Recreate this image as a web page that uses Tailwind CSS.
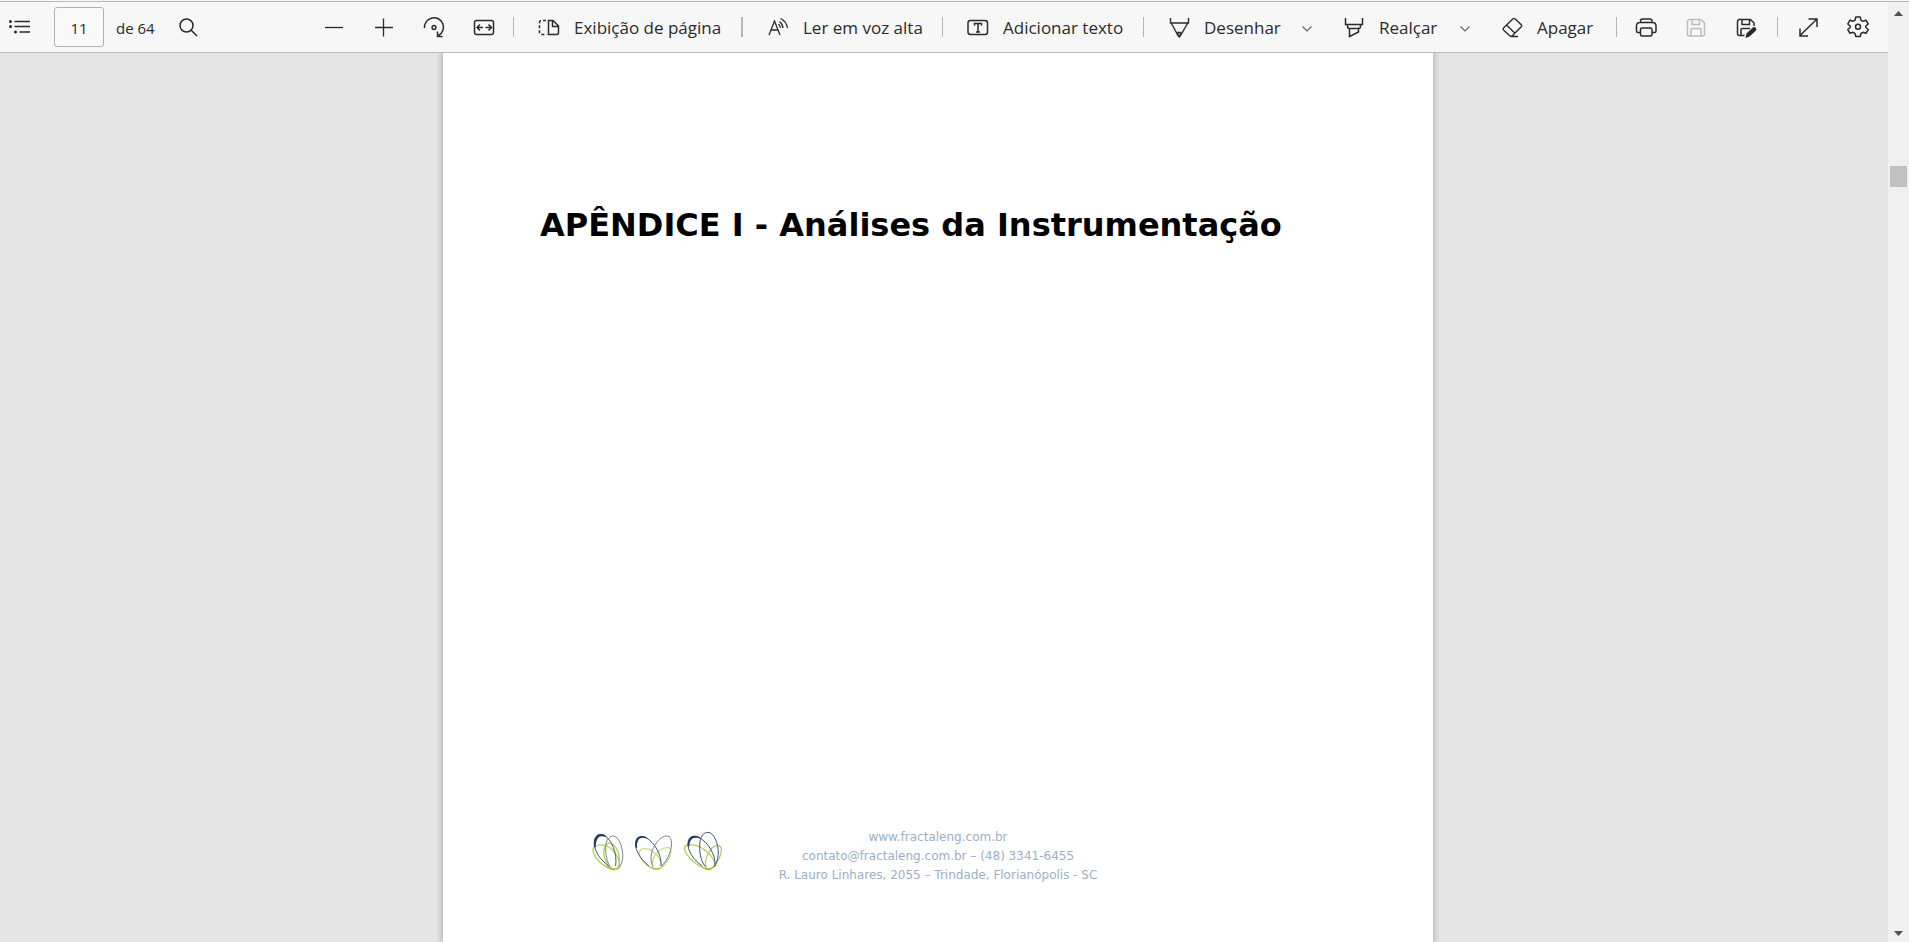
<!DOCTYPE html>
<html lang="pt-BR">
<head>
<meta charset="utf-8">
<title>Visualizador de PDF</title>
<script src="https://cdn.jsdelivr.net/npm/@tailwindcss/browser@4"></script>
</head>
<body class="flex h-screen flex-col overflow-hidden bg-[#f7f7f7] pt-px font-['Open_Sans','Noto_Sans',sans-serif] text-[#2b2b2b]">
<div class="flex min-h-0 flex-1 border-t border-[#bababa]">
  <div class="flex min-w-0 flex-1 flex-col">
    <header class="flex h-[51px] shrink-0 items-center justify-between border-b border-[#bababa] bg-[#f7f7f7] pr-[5px] pl-2 text-[17px] whitespace-nowrap">
      <div class="flex items-center">
        <button type="button" aria-label="Sumário" class="mr-[22px] flex">
          <svg class="size-6" viewBox="0 0 24 24" fill="none" stroke="currentColor" stroke-width="1.5"><path d="M6.500 6.500H22M6.500 11.500H22M11.500 17H22"/><g fill="currentColor" stroke="none"><circle cx="2.500" cy="6.500" r="1.500"/><circle cx="2.500" cy="11.500" r="1.500"/><circle cx="7.500" cy="17" r="1.500"/></g></svg>
        </button>
        <input type="text" value="11" aria-label="Página" class="h-10 w-[50px] rounded-[3px] border border-[#b0b0b0] bg-[#f9f9f9] pt-0.5 text-center text-[15px]">
        <span class="ml-3 w-[60px] pt-0.5 text-[15px]">de 64</span>
        <button type="button" aria-label="Localizar" class="flex">
          <svg class="size-6" viewBox="0 0 24 24" fill="none" stroke="currentColor" stroke-width="1.500"><circle cx="10.500" cy="10.500" r="6.500"/><path d="M15 15l6 6"/></svg>
        </button>
      </div>
      <div class="flex items-center">
        <button type="button" aria-label="Reduzir" class="flex w-[50px] justify-center"><svg class="size-6" viewBox="0 0 24 24" fill="none" stroke="currentColor" stroke-width="1.300"><path d="M3 12.500H21"/></svg></button>
        <button type="button" aria-label="Ampliar" class="flex w-[50px] justify-center"><svg class="size-6" viewBox="0 0 24 24" fill="none" stroke="currentColor" stroke-width="1.300"><path d="M3 12.500H21M11.500 3.500V21.500"/></svg></button>
        <button type="button" aria-label="Girar" class="flex w-[50px] justify-center"><svg class="size-6" viewBox="0 0 24 24" fill="none" stroke="currentColor" stroke-width="1.500"><path d="M2.500 13A9.500 9.500 0 1 1 16.500 20.500M15.500 16.500V21.500H20.500"/><circle cx="12" cy="12.500" r="1.900"/></svg></button>
        <button type="button" aria-label="Ajustar à largura" class="flex w-[50px] justify-center"><svg class="size-6" viewBox="0 0 24 24" fill="none" stroke="currentColor" stroke-width="1.500"><rect x="2.500" y="5.500" width="19" height="14" rx="2"/><path d="M5.500 12.500H11M13.500 12.500H19M8 9.500l-3 3 3 3M16.500 9.500l3 3-3 3"/></svg></button>
        <span class="ml-1 h-5 w-px bg-[#b5b5b5]"></span>
        <button type="button" class="flex w-[227px] items-center gap-[13px] pl-[23px]"><svg class="size-6 shrink-0" viewBox="0 0 24 24" fill="none" stroke="currentColor" stroke-width="1.500"><path d="M11.500 5.500H16L21.500 11V17.500a2 2 0 0 1-2 2H11.500ZM15.500 5.500V11.500H21.500"/><path stroke-dasharray="3 2" d="M9 5.500H4.500a2 2 0 0 0-2 2V17.500a2 2 0 0 0 2 2H9.500"/></svg><span class="pt-0.5">Exibição de página</span></button>
        <span class="h-5 w-0.5 bg-[#b5b5b5]"></span>
        <button type="button" class="flex w-[199px] items-center gap-[13px] pl-[23px]"><svg class="size-6 shrink-0" viewBox="0 0 24 24" fill="none" stroke="currentColor" stroke-width="1.300"><path d="M3 20L8.500 6 14 20M5 15H12M13.500 6.500Q16.500 8.500 17 13M14.500 3.500Q20.500 6.500 21.500 13M12.500 9Q14 10 14.500 13"/></svg><span class="pt-0.5">Ler em voz alta</span></button>
        <span class="h-5 w-px bg-[#b5b5b5]"></span>
        <button type="button" class="flex w-[200px] items-center gap-[13px] pl-[23px]"><svg class="size-6 shrink-0" viewBox="0 0 24 24" fill="none" stroke="currentColor" stroke-width="1.500"><rect x="2" y="5.500" width="19.500" height="14" rx="2.500"/><path d="M8.500 10.500V8.500H15.500V10.500M12 8.500V17M10 17H14"/></svg><span class="pt-0.5">Adicionar texto</span></button>
        <span class="h-5 w-px bg-[#b5b5b5]"></span>
        <button type="button" class="flex w-[151px] items-center gap-[13px] pl-[23px]"><svg class="size-6 shrink-0" viewBox="0 0 24 24" fill="none" stroke="currentColor" stroke-width="1.400"><path d="M3.500 3V8H21.500V3M4.500 8.500L11 20.500H13.500L20.500 8.500M11 20.500V17.500H13.500V20.500L12.300 22Z"/></svg><span class="pt-0.5">Desenhar</span></button>
        <button type="button" aria-label="Opções de desenho" class="flex w-6 justify-center"><svg class="size-6" viewBox="0 0 24 24" fill="none" stroke="#666" stroke-width="1.200"><path d="M7.500 11.500l4.500 4.500 4.500-4.500"/></svg></button>
        <button type="button" class="flex w-[134px] items-center gap-[13px] pl-[23px]"><svg class="size-6 shrink-0" viewBox="0 0 24 24" fill="none" stroke="currentColor" stroke-width="1.500"><path d="M3.500 3V9.500H20.500V3M5.500 9.500V11.500a2 2 0 0 0 2 2H16.500a2 2 0 0 0 2-2V9.500M7.500 13.500V21.500L16.500 17V13.500"/></svg><span class="pt-0.5">Realçar</span></button>
        <button type="button" aria-label="Opções de realce" class="flex w-6 justify-center"><svg class="size-6" viewBox="0 0 24 24" fill="none" stroke="#666" stroke-width="1.200"><path d="M7.500 11.500l4.500 4.500 4.500-4.500"/></svg></button>
        <button type="button" class="flex w-[139px] items-center gap-[13px] pl-[23px]"><svg class="size-6 shrink-0" viewBox="0 0 24 24" fill="none" stroke="currentColor" stroke-width="1.400"><path d="M15 3.700L21.500 10Q22 11 21.500 11.600L12.500 20.500Q11 22 9.500 20.500L3.500 15Q2.500 14 3.500 13L13 3.700Q14 3 15 3.700ZM6.500 10L15 18.200M10.500 21.500H18"/></svg><span class="pt-0.5">Apagar</span></button>
        <span class="h-5 w-px bg-[#b5b5b5]"></span>
        <button type="button" aria-label="Imprimir" class="ml-1 flex w-[50px] justify-center"><svg class="size-6" viewBox="0 0 24 24" fill="none" stroke="currentColor" stroke-width="1.500"><path d="M6.500 7.500V6a2 2 0 0 1 2-2H16a2 2 0 0 1 2 2V7.500M6.500 17.500H4a1.500 1.500 0 0 1-1.500-1.500V11Q2.500 7.500 6 7.500H18.500Q22 7.500 22 11V16a1.500 1.500 0 0 1-1.500 1.500H18"/><rect x="6.500" y="13" width="11.500" height="8" rx="1.500"/></svg></button>
        <button type="button" disabled aria-label="Salvar" class="flex w-[50px] justify-center text-[#bdbdbd]"><svg class="size-6" viewBox="0 0 24 24" fill="none" stroke="currentColor" stroke-width="1.500"><path d="M5.500 4.500H17L20.500 8V19a2 2 0 0 1-2 2H5.500a2 2 0 0 1-2-2V6.500a2 2 0 0 1 2-2ZM8 4.500V9.500H15.500V4.500M7 21V14.500a1 1 0 0 1 1-1H16a1 1 0 0 1 1 1V21"/></svg></button>
        <button type="button" aria-label="Salvar como" class="mr-1.5 flex w-[50px] justify-center"><svg class="size-6" viewBox="0 0 24 24" fill="none" stroke="currentColor" stroke-width="1.500"><path d="M10.500 20.500H5.500a2 2 0 0 1-2-2V6.500a2 2 0 0 1 2-2H16.500L20 8V11M8 4.500V9.500H15.500V4.500M7 20.500V14.500a1 1 0 0 1 1-1H16"/><path fill="currentColor" stroke="none" d="M19 12.200Q21 11.500 22 13T21.500 16L15.500 21.500 11.500 23 12.500 18.500Z"/></svg></button>
        <span class="h-5 w-px bg-[#b5b5b5]"></span>
        <button type="button" aria-label="Tela inteira" class="ml-[5px] flex w-[50px] justify-center"><svg class="size-6" viewBox="0 0 24 24" fill="none" stroke="currentColor" stroke-width="1.500"><path d="M4 20.500L20.500 4.500M12.500 4H21V12M4 13.500V21H12"/></svg></button>
        <button type="button" aria-label="Configurações" class="flex w-[50px] justify-center"><svg class="size-6" viewBox="0 0 24 24" fill="none" stroke="currentColor" stroke-width="1.500" stroke-linejoin="round"><path d="M9.800 2H14.200L15 5.300L17 6.300L20 5.200L22.200 9L19.800 11V12.500L22.200 14.500L20 18.300L17 17.300L15 18.500L14.200 21.500H9.800L9 18.500L7 17.300L4 18.300L1.800 14.500L4.200 12.500V11L1.800 9L4 5.200L7 6.300L9 5.300Z"/><circle cx="12" cy="11.800" r="2.500"/></svg></button>
      </div>
    </header>
    <main class="flex min-h-0 flex-1 justify-center overflow-hidden bg-[#e6e6e6] pr-3">
      <article class="flex w-[990px] flex-col justify-between bg-white pb-[57px] shadow-[0_0_6px_2px_rgba(0,0,0,0.2)]">
        <h1 class="pt-[150px] pl-[97px] font-['DejaVu_Sans',sans-serif] text-[32px] leading-[44px] font-bold whitespace-nowrap text-black">APÊNDICE I - Análises da Instrumentação</h1>
        <footer class="grid grid-cols-3 items-end">
          <svg class="mb-3 ml-[147px] h-[43px] w-[133px]" viewBox="30 30 399 129" fill="none" role="img" aria-label="Fractal Engenharia">
            <g stroke="#b9cf55" stroke-width="4">
              <path d="M105 150C70 145 38 110 39 88C42 75 60 73 78 77C105 88 122 120 118 145"/>
              <path d="M100 150C80 140 68 110 73 85C78 65 95 65 105 80C118 95 125 130 110 150"/>
              <path d="M232 149C200 145 178 115 178 98C180 84 200 82 215 92C235 105 247 125 245 142" stroke="#cbdc83"/>
              <path d="M222 148C212 130 220 105 240 90C255 80 272 80 273 92C273 110 255 140 232 149" stroke="#cbdc83"/>
              <path d="M390 150C350 142 318 108 313 85C315 72 330 72 350 77C380 88 405 115 405 140"/>
              <path d="M382 148C370 130 378 105 395 85C405 75 418 72 424 85C426 105 410 135 390 150"/>
            </g>
            <g stroke="#40567c" stroke-width="3">
              <path d="M86 138C62 120 42 95 43 65C44 45 58 40 72 46C95 58 112 100 107 138"/>
              <path d="M94 143C85 135 76 115 77 80C78 60 88 48 100 48C118 50 130 85 128 115C126 130 120 142 112 146" stroke="#71859f"/>
              <path d="M207 138C180 117 165 90 167 68C168 50 182 46 198 53C225 68 245 105 243 138"/>
              <path d="M219 140C210 125 210 95 228 70C240 52 258 44 268 50C280 62 275 95 258 122L246 138" stroke="#71859f"/>
              <path d="M367 138C340 120 322 92 324 68C326 48 342 45 358 53C385 68 408 105 405 138"/>
              <path d="M377 140C365 128 358 105 359 75C360 50 370 37 384 37C402 38 415 70 415 100C414 120 408 135 400 143"/>
            </g>
            <path fill="#243c66" d="M42 82C39 52 52 38 70 43Q77 46 81 53C62 43 48 48 47 82ZM166 82C163 52 179 43 197 50L204 57C184 49 170 52 171 84ZM323 78C323 50 338 43 357 50L364 57C343 48 328 53 328 80Z"/>
            <path fill="#9fbc33" d="M70 132Q96 152 119 140Q104 161 70 132ZM203 136Q230 153 249 138Q230 160 203 136ZM358 138Q385 152 405 138Q386 160 358 138Z"/>
          </svg>
          <address class="text-center font-['DejaVu_Sans',sans-serif] text-[12px] leading-[19px] whitespace-nowrap text-[#9bb0c6] not-italic">
            <a href="#" class="block">www.fractaleng.com.br</a>
            <p><a href="#">contato@fractaleng.com.br</a> – (48) 3341-6455</p>
            <p>R. Lauro Linhares, 2055 – Trindade, Florianópolis - SC</p>
          </address>
        </footer>
      </article>
    </main>
  </div>
  <aside aria-label="Barra de rolagem" class="flex w-[21px] shrink-0 flex-col items-center bg-[#f0f0f0]">
    <button type="button" aria-label="Rolar para cima" class="flex pt-[9px]"><svg class="h-[5px] w-[9px]" viewBox="0 0 9 5" fill="#505050"><path d="M4.500 0L9 5H0Z"/></svg></button>
    <div class="mt-[150px] h-[21px] w-[17px] bg-[#c1c1c1]"></div>
    <button type="button" aria-label="Rolar para baixo" class="mt-auto flex pb-1.5"><svg class="h-[5px] w-[9px]" viewBox="0 0 9 5" fill="#505050"><path d="M4.500 5L9 0H0Z"/></svg></button>
  </aside>
</div>
</body>
</html>
